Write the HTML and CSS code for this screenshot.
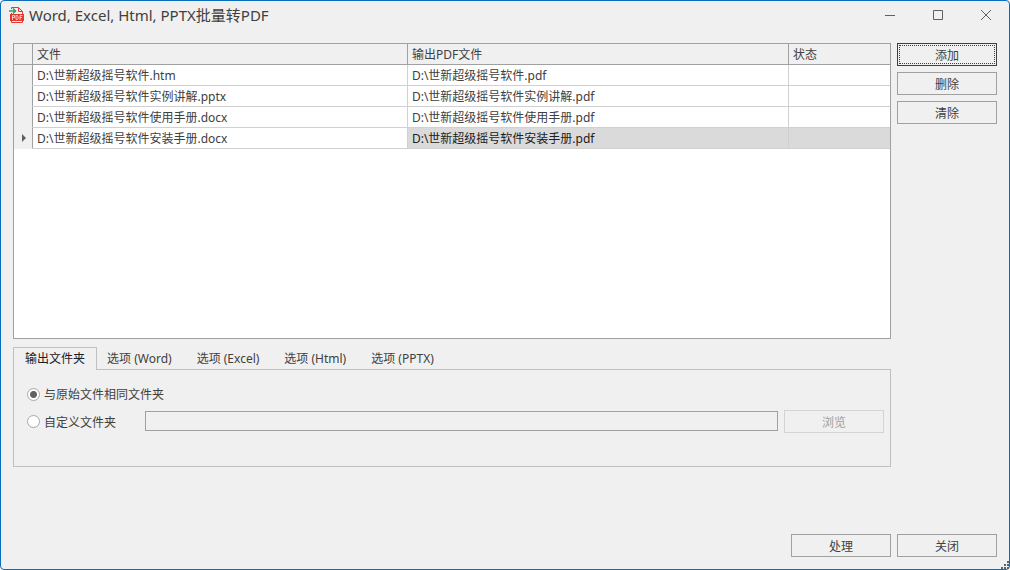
FILE: index.html
```html
<!DOCTYPE html>
<html lang="zh-CN">
<head>
<meta charset="utf-8">
<title>Word, Excel, Html, PPTX批量转PDF</title>
<link rel="stylesheet" href="styles.css">
</head>
<body>
<div class="window">
  <header class="titlebar">
    <svg class="app-icon" viewBox="0 0 16 18" aria-hidden="true">
      <path d="M2.500 3V1.500H9.500L13.500 5.500V9H2.500V7" fill="#fbeeee" stroke="#e5392d" stroke-width="1"/>
      <path d="M9.500 1.500v4h4" fill="none" stroke="#e5392d" stroke-width="1"/>
      <path d="M0 5h6M4 2.500L6.500 5 4 7.500" fill="none" stroke="#2c9b72" stroke-width="1.500"/>
      <rect x="1" y="8" width="14" height="7" fill="#e5392d"/>
      <path d="M2.500 15v1.500h11V15" fill="none" stroke="#e5392d"/>
      <path d="M3.500 14V9.500h2v2h-2M7 9.500h1.500l.5.700v2.500l-.5.800H7zM11 14V9.500h2.500M11 11.500h2" fill="none" stroke="#fff" stroke-width=".7"/>
    </svg>
    <h1 class="title">Word, Excel, Html, PPTX批量转PDF</h1>
    <div class="window-controls">
      <button class="control" type="button" aria-label="最小化"><svg viewBox="0 0 12 12"><path d="M1 6.500h10"/></svg></button>
      <button class="control" type="button" aria-label="最大化"><svg viewBox="0 0 12 12"><path d="M1.500 1.500h9v9h-9z"/></svg></button>
      <button class="control" type="button" aria-label="关闭窗口"><svg viewBox="0 0 12 12"><path d="M1 1l10 10M11 1L1 11"/></svg></button>
    </div>
  </header>
  <main class="content">
    <div class="left">
      <div class="grid">
        <table class="files">
          <colgroup><col class="col-mark"><col class="col-file"><col class="col-output"><col class="col-state"></colgroup>
          <thead>
            <tr><th></th><th scope="col">文件</th><th scope="col">输出PDF文件</th><th scope="col">状态</th></tr>
          </thead>
          <tbody>
            <tr><td></td><td>D:\世新超级摇号软件.htm</td><td>D:\世新超级摇号软件.pdf</td><td></td></tr>
            <tr><td></td><td>D:\世新超级摇号软件实例讲解.pptx</td><td>D:\世新超级摇号软件实例讲解.pdf</td><td></td></tr>
            <tr><td></td><td>D:\世新超级摇号软件使用手册.docx</td><td>D:\世新超级摇号软件使用手册.pdf</td><td></td></tr>
            <tr class="current"><td><svg class="marker" viewBox="0 0 4 8" aria-hidden="true"><path d="M0 0l4 4-4 4z"/></svg></td><td>D:\世新超级摇号软件安装手册.docx</td><td>D:\世新超级摇号软件安装手册.pdf</td><td></td></tr>
          </tbody>
        </table>
      </div>
      <div class="tabs" role="tablist">
        <button class="tab active" type="button" role="tab" aria-selected="true" id="tab-folder" aria-controls="panel">输出文件夹</button>
        <button class="tab" type="button" role="tab" aria-selected="false">选项 (Word)</button>
        <button class="tab" type="button" role="tab" aria-selected="false">选项 (Excel)</button>
        <button class="tab" type="button" role="tab" aria-selected="false">选项 (Html)</button>
        <button class="tab" type="button" role="tab" aria-selected="false">选项 (PPTX)</button>
      </div>
      <section class="panel" id="panel" role="tabpanel" aria-labelledby="tab-folder">
        <label class="choice"><input class="radio" type="radio" name="folder" checked>与原始文件相同文件夹</label>
        <div class="custom">
          <label class="choice"><input class="radio" type="radio" name="folder">自定义文件夹</label>
          <input class="path" type="text" aria-label="自定义文件夹" disabled>
          <button class="btn" type="button" disabled>浏览</button>
        </div>
      </section>
    </div>
    <div class="actions">
      <button class="btn focused" type="button">添加</button>
      <button class="btn" type="button">删除</button>
      <button class="btn" type="button">清除</button>
    </div>
  </main>
  <footer class="footer">
    <button class="btn" type="button">处理</button>
    <button class="btn" type="button">关闭</button>
  </footer>
  <svg class="grip" viewBox="0 0 8 8" aria-hidden="true"><path d="M6 0h2v2H6zM3 3h2v2H3zM6 3h2v2H6zM0 6h2v2H0zM3 6h2v2H3zM6 6h2v2H6z"/></svg>
</div>
</body>
</html>
```
FILE: styles.css
```css
* { box-sizing: border-box; }

body {
  margin: 0;
  background: #fff;
  color: #404040;
  font: 12px/16px "Noto Sans", "Noto Sans CJK SC", sans-serif;
}

button, input { font: inherit; color: inherit; }

.window {
  position: relative;
  display: flex;
  flex-direction: column;
  min-height: 100vh;
  background: #f0f0f0;
  border: 1px solid #0a6ebd;
  border-radius: 4px;
}

.titlebar {
  display: flex;
  align-items: center;
  height: 28px;
  padding-left: 8px;
}

.app-icon { width: 16px; height: 18px; }

.title {
  flex: 1;
  margin: 0 0 0 4px;
  font-size: 15px;
  line-height: 20px;
  font-weight: 400;
}

.window-controls { display: flex; }

.control {
  display: flex;
  align-items: center;
  justify-content: center;
  width: 48px;
  height: 28px;
  padding: 0 0 0 2px;
  border: 0;
  background: none;
}

.control svg {
  width: 12px;
  height: 12px;
  fill: none;
  stroke: #606060;
}

.content {
  display: flex;
  gap: 6px;
  padding: 14px 12px 0;
}

.left { flex: 1; min-width: 0; }

.grid {
  height: 296px;
  background: #fff;
  border: 1px solid #a0a0a0;
}

.files {
  width: 100%;
  table-layout: fixed;
  border-collapse: separate;
  border-spacing: 0;
}

.col-mark { width: 19px; }
.col-file { width: 42.8%; }
.col-output { width: 43.5%; }

.files th, .files td {
  height: 21px;
  padding: 2px 4px 0;
  font-weight: 400;
  line-height: 18px;
  text-align: left;
  white-space: nowrap;
  overflow: hidden;
  border-right: 1px solid #d0d0d0;
  border-bottom: 1px solid #d0d0d0;
}

.files th {
  background: #f0f0f0;
  border-color: #a0a0a0;
}

.files tr > :last-child { border-right: 0; }

.files td:first-child {
  padding: 0 0 0 8px;
  background: #f0f0f0;
  border-right-color: #a0a0a0;
  border-bottom-color: #f0f0f0;
}

.files .current td:nth-child(n + 3) {
  background: #dadada;
  color: #202020;
}

.marker {
  display: block;
  width: 4px;
  height: 8px;
  fill: #606060;
}

.tabs {
  display: flex;
  margin-top: 8px;
}

.tab {
  height: 23px;
  padding: 0 15px 0 10px;
  border: 0;
  background: none;
  white-space: nowrap;
}

.tab.active {
  position: relative;
  padding: 0 11px;
  border: 1px solid #c0c0c0;
  border-bottom: 0;
  background: #f0f0f0;
  color: #202020;
}

.panel {
  height: 98px;
  margin-top: -1px;
  padding: 16px 6px 0 13px;
  border: 1px solid #c0c0c0;
}

.choice {
  display: flex;
  align-items: center;
  gap: 4px;
  line-height: 18px;
}

.radio {
  appearance: none;
  width: 13px;
  height: 13px;
  margin: 0 0 2px;
  border: 1px solid #a8a8a8;
  border-radius: 50%;
  background: #fff;
}

.radio:checked { background: radial-gradient(circle, #606060 3px, #fff 4px); }

.custom {
  display: flex;
  align-items: center;
  gap: 6px;
  margin-top: 6px;
}

.custom .choice { width: 112px; padding-top: 2px; }

.path {
  flex: 1;
  min-width: 0;
  height: 20px;
  margin-bottom: 1px;
  padding: 0 4px;
  border: 1px solid #a0a0a0;
  background: #f0f0f0;
}

.btn {
  width: 100px;
  height: 23px;
  padding: 2px 0 0;
  border: 1px solid #a0a0a0;
  background: #f0f0f0;
}

.btn:disabled {
  border-color: #d4d4d4;
  color: #a0a0a0;
}

.btn.focused {
  border-color: #404040;
  outline: 1px dotted #404040;
  outline-offset: -3px;
}

.actions {
  display: flex;
  flex-direction: column;
  gap: 6px;
}

.footer {
  display: flex;
  justify-content: flex-end;
  gap: 6px;
  margin-top: auto;
  padding: 0 12px 12px;
}

.grip {
  position: absolute;
  right: 0;
  bottom: 0;
  width: 8px;
  height: 8px;
  fill: #606060;
}
```
